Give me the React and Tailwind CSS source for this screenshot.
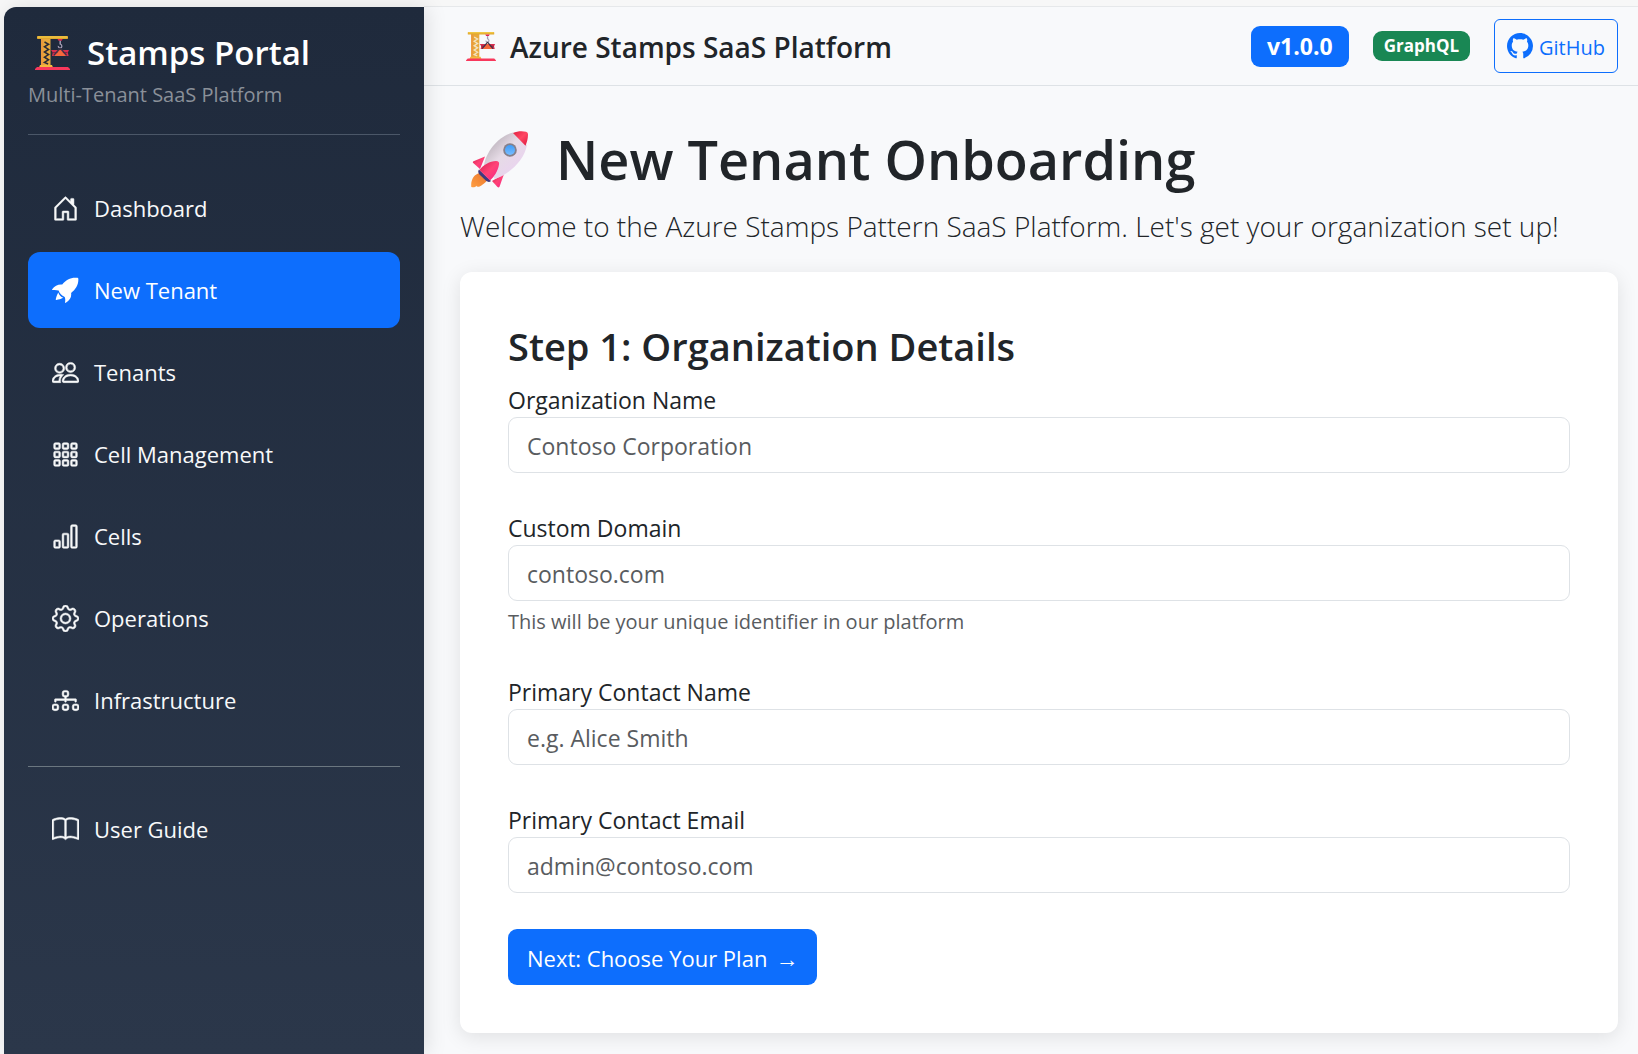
import React from "react";
import {
  BsHouseDoor,
  BsPeople,
  BsGrid3X3Gap,
  BsBarChart,
  BsGear,
  BsDiagram3,
  BsBook,
  BsGithub,
} from "react-icons/bs";

function RocketIcon({ className }) {
  return (
    <svg viewBox="0 0 28 27" className={className} fill="currentColor" aria-hidden="true">
      <path d="M26.300.4C20-.4 14.500 2.300 10.600 7.400 6.500 7 2.500 8.700.2 12.200c-.3.500-.1.800.4.800 2.300-.2 4.600-.1 6.300.6.700 2.800 3.200 5.600 6.300 6.600.700 1.700.7 3.500.3 5.600-.1.500.3.700.800.5 4.300-2.400 6.200-6.200 5.500-10.200C24.800 12.300 27.700 7 27.300 1.400c0-.6-.4-.9-1-1z" />
      <path d="M6.500 15.500c-1.300 2.200-2.200 4.800-2.600 7.200-.1.500.1.700.6.600 2.400-.3 5-.9 7.200-2.200-2.500-1.200-4.300-3.100-5.200-5.600z" />
    </svg>
  );
}

const NAV = [
  { label: "Dashboard", Icon: BsHouseDoor },
  { label: "New Tenant", Icon: RocketIcon, active: true },
  { label: "Tenants", Icon: BsPeople },
  { label: "Cell Management", Icon: BsGrid3X3Gap },
  { label: "Cells", Icon: BsBarChart },
  { label: "Operations", Icon: BsGear },
  { label: "Infrastructure", Icon: BsDiagram3 },
];

const FIELDS = [
  { id: "org", label: "Organization Name", placeholder: "Contoso Corporation" },
  {
    id: "domain",
    label: "Custom Domain",
    placeholder: "contoso.com",
    help: "This will be your unique identifier in our platform",
  },
  { id: "contact", label: "Primary Contact Name", placeholder: "e.g. Alice Smith" },
  { id: "email", label: "Primary Contact Email", placeholder: "admin@contoso.com", type: "email" },
];

function Crane({ className, lattice }) {
  return (
    <svg viewBox="0 0 35 34" className={className} aria-hidden="true">
      <rect x="6" y="2" width="9.5" height="28" fill="#e8a93c" />
      <rect x="6" y="2" width="2.4" height="28" fill="#eb9a3c" />
      <path
        d="M9.5 6l4 2.2-4 2.6 4 2.6-4 2.6 4 2.6-4 2.6 4 2.6-4 2.6 3.6 1.6"
        fill="none"
        stroke={lattice}
        strokeWidth="1.6"
      />
      <path d="M5 29h12l1 2.6H4z" fill="#f2b93f" />
      <rect x="2" y="0" width="31" height="3" rx="0.8" fill="#e0a82e" />
      <rect x="2.5" y="0.4" width="30" height="1.2" rx="0.6" fill="#f6d04a" />
      <path d="M2 31h31l2 2v1H0v-1z" fill="#f8385c" />
      <path d="M22.5 3h5.2l-1 1.8h-3.2z" fill="#e0244f" />
      <path d="M25.2 4.8v3.6" stroke="#a49cb3" strokeWidth="1.5" />
      <path d="M25.2 8c2.2.8 2.2 3.6 0 3.8-1.4 0-2-.8-1.8-1.8" fill="none" stroke="#a49cb3" strokeWidth="1.3" />
      <path d="M16 14h18l-1.2 2.6.8 3.4H17l.8-3.4z" fill="#d9304f" />
      <path d="M17.8 16h14.6v1.2H17.8z" fill="#8f1f3d" />
      <path d="M25.2 13.4l5.6 6.6H19.6z" fill="#f4693c" />
      <path d="M25.2 12l-6.4 7.4M25.2 12l6.4 7.4" stroke="#3b3547" strokeWidth="1.3" />
    </svg>
  );
}

function RocketEmoji({ className }) {
  return (
    <svg viewBox="0 0 57 57" className={className} aria-hidden="true">
      <defs>
        <linearGradient id="hull" x1="0.15" y1="0.2" x2="0.75" y2="0.85">
          <stop offset="0" stopColor="#bdb4bd" />
          <stop offset="0.45" stopColor="#e6dbe6" />
          <stop offset="1" stopColor="#ead3f0" />
        </linearGradient>
        <linearGradient id="nose" x1="0" y1="0" x2="1" y2="1">
          <stop offset="0" stopColor="#e01f3f" />
          <stop offset="0.5" stopColor="#ff4763" />
          <stop offset="1" stopColor="#dd1840" />
        </linearGradient>
        <linearGradient id="fin" x1="0" y1="0" x2="1" y2="1">
          <stop offset="0" stopColor="#d81e52" />
          <stop offset="0.5" stopColor="#ff4376" />
          <stop offset="1" stopColor="#f5238a" />
        </linearGradient>
        <linearGradient id="flame" x1="1" y1="0" x2="0" y2="1">
          <stop offset="0" stopColor="#e8742c" />
          <stop offset="1" stopColor="#ff9f43" />
        </linearGradient>
        <linearGradient id="glass" x1="0" y1="0" x2="0" y2="1">
          <stop offset="0" stopColor="#3f9cf8" />
          <stop offset="1" stopColor="#78bdff" />
        </linearGradient>
      </defs>
      <path d="M9 42C3 43-.5 49 .3 56c2.500.6 4.500 0 5.200-1.300C6 56.600 9 56 11 54c3-2 5-4 6-6z" fill="url(#flame)" />
      <path d="M14 25.500L2.500 30.200c-1 .5-.8 1.300 0 2L9 38z" fill="url(#fin)" />
      <path d="M21 50l5.500 6c.7.600 1.600.500 2-.3L33 43z" fill="url(#fin)" />
      <path d="M8 38.500l12 11.500c-1.500 1.400-3.500 1-5-.3L8.500 43.500c-1.500-1.500-1.700-3.500-.5-5z" fill="#3d3a80" />
      <path d="M13 34C15 21 27 5 42 1.500L56 14C53 30 38 43 24 48z" fill="url(#hull)" />
      <path d="M42 2C46 .2 51-.2 55 .8c1.500.3 2 1.500 2 3-.1 4-1 7.500-2.500 11z" fill="url(#nose)" />
      <path d="M8.500 39C12 34 19 30 25 30c2.500 0 3.500 1.500 3 3.500C27 40 23 46 19 49.500z" fill="url(#fin)" />
      <circle cx="39" cy="19" r="6.800" fill="#85808c" />
      <circle cx="39" cy="19" r="5" fill="url(#glass)" />
    </svg>
  );
}

function NavItem({ label, Icon, active }) {
  return (
    <a
      href="#"
      aria-current={active ? "page" : undefined}
      className={
        "flex h-[76px] items-center gap-[15px] rounded-xl pl-6 pr-4 text-[22px] leading-9 " +
        (active ? "bg-[#0d6efd] text-white" : "text-[#f8f9fa]")
      }
    >
      <Icon className={active ? "size-[27px] shrink-0" : "size-[27px] shrink-0 stroke-current [stroke-width:0.3px]"} />
      <span>{label}</span>
    </a>
  );
}

function Field({ id, label, placeholder, help, type = "text" }) {
  return (
    <div className="mb-9 text-[23px]">
      <label htmlFor={id} className="block pt-0.5 leading-[34px]">
        {label}
      </label>
      <input
        id={id}
        type={type}
        placeholder={placeholder}
        aria-describedby={help ? id + "-help" : undefined}
        className="block h-14 w-full rounded-[9px] border border-[#dee2e6] bg-white px-[18px] pt-0.5 placeholder:text-[#595c5f]"
      />
      {help && (
        <p id={id + "-help"} className="pt-1.5 text-xl leading-[30px] text-[#595c5f]">
          {help}
        </p>
      )}
    </div>
  );
}

export default function App() {
  return (
    <div className="flex min-h-screen bg-[#f7f7f7] pl-1 pt-1.5 font-['Open_Sans','Noto_Sans',sans-serif] text-[#212529]">
      <aside className="relative z-10 mt-px w-[420px] shrink-0 rounded-tl-xl bg-linear-to-b from-[#1f2a3c] to-[#2b374a] p-6 shadow-[4px_0_20px_rgba(0,0,0,0.1)]">
        <div className="border-b border-[#4b5768] pb-6">
          <div className="flex items-center gap-[17px] pl-[7px]">
            <Crane className="h-[34px] w-[35px]" lattice="#2b2a35" />
            <span className="text-[33px] font-semibold leading-[44px] text-white">Stamps Portal</span>
          </div>
          <p className="pt-[5px] text-xl leading-[30px] text-[#8a9099]">Multi-Tenant SaaS Platform</p>
        </div>
        <nav className="pt-[35px]">
          <ul className="flex flex-col gap-1.5">
            {NAV.map((item) => (
              <li key={item.label}>
                <NavItem {...item} />
              </li>
            ))}
          </ul>
          <hr className="mb-6 mt-7 border-[#6b7780]" />
          <NavItem label="User Guide" Icon={BsBook} />
        </nav>
      </aside>

      <div className="min-w-0 grow border-t border-[#e6e8ea] bg-[#f8f9fb]">
        <header className="flex items-center justify-between border-b border-[#dee2e6] py-3 pl-[42px] pr-5">
          <div className="flex items-center gap-3.5">
            <Crane className="h-[29px] w-[30px]" lattice="#f3e3c0" />
            <span className="pt-0.5 text-[28px] font-semibold leading-9">Azure Stamps SaaS Platform</span>
          </div>
          <div className="flex items-center gap-6">
            <span className="rounded-[9px] bg-[#0d6efd] px-4 text-[23px] font-bold leading-[41px] text-white">
              v1.0.0
            </span>
            <span className="rounded-[9px] bg-[#198754] px-[11px] text-[17px] font-bold leading-[30px] text-white">
              GraphQL
            </span>
            <a
              href="#"
              className="flex h-[54px] items-center gap-1.5 rounded-md border border-[#0d6efd] px-3 text-xl text-[#0d6efd]"
            >
              <BsGithub className="size-[26px]" />
              <span className="pt-1">GitHub</span>
            </a>
          </div>
        </header>

        <main className="pb-5 pl-9 pr-5 pt-9">
          <h1 className="flex items-center gap-7 pl-[11px] text-[54px] font-semibold leading-[74px]">
            <RocketEmoji className="size-[57px]" />
            New Tenant Onboarding
          </h1>
          <p className="mb-6 mt-2 text-[28px] font-light leading-[44px]">
            Welcome to the Azure Stamps Pattern SaaS Platform. Let's get your organization set up!
          </p>
          <form
            className="rounded-xl bg-white p-12 shadow-[0_4px_20px_rgba(0,0,0,0.1)]"
            onSubmit={(e) => e.preventDefault()}
          >
            <h2 className="mb-[9px] text-[38px] font-semibold leading-[52px]">Step 1: Organization Details</h2>
            {FIELDS.map((field) => (
              <Field key={field.id} {...field} />
            ))}
            <button
              type="submit"
              className="flex h-14 items-center gap-2 rounded-[9px] bg-[#0d6efd] px-[19px] pt-0.5 text-[22px] leading-9 text-white"
            >
              Next: Choose Your Plan <span className="text-[23px]">→</span>
            </button>
          </form>
        </main>
      </div>
    </div>
  );
}
